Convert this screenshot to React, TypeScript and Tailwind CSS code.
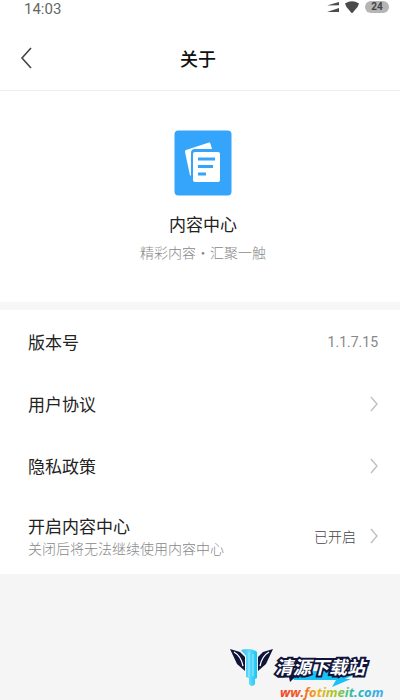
import type { ReactNode } from "react";

function Chevron() {
  return (
    <svg className="h-4 w-2 shrink-0" viewBox="0 0 8 16" fill="none" stroke="#bdbdbd" strokeWidth="1.3">
      <path d="M1 1 7 8 1 15" />
    </svg>
  );
}

function StatusBar() {
  return (
    <div className="flex items-center justify-between pl-6 pr-[11px] text-[#666]">
      <span className="font-['Roboto',sans-serif] text-[15px] leading-[18px]">14:03</span>
      <div className="flex items-center gap-1.5 pb-1">
        <svg className="h-3 w-3" viewBox="0 0 12 12" fill="#4a4a4a">
          <path d="M0 4.600 12 1v3.200zM0 11l12-4V11z" />
        </svg>
        <svg className="h-3 w-[14px]" viewBox="0 0 14 12" fill="#4a4a4a">
          <path d="M0 2.500Q7-2 14 2.500L12.500 6 7 12.500 1.500 6z" />
        </svg>
        <span className="h-3 w-6 rounded-full bg-[#b5b5b5] text-center font-['Roboto',sans-serif] text-[10px] font-bold leading-3 text-[#444]">
          24
        </span>
      </div>
    </div>
  );
}

function AppIcon() {
  return (
    <svg className="h-[66px] w-[58px]" viewBox="0 0 58 66">
      <rect x="0.5" y="0.5" width="57" height="65" rx="4" fill="#35a5fb" />
      <path d="M11 22q-.3-1.500 1-2L35 12.500q1-.3 1.300.7L38 19H21q-4 0-4 4v22.500h-1z" fill="#fff" />
      <rect x="19" y="22" width="27" height="30" rx="2" fill="#fff" />
      <path d="M24 29h17M24 36.500h15M24 44h8" stroke="#35a5fb" strokeWidth="3" />
    </svg>
  );
}

function Row({ label, note, children }: { label: string; note?: string; children: ReactNode }) {
  return (
    <button
      type="button"
      className={`flex w-full items-center justify-between text-left ${note ? "h-[77px]" : "h-[62px]"}`}
    >
      <span className="flex flex-col">
        <span className="text-[17px] leading-6 text-[#222]">{label}</span>
        {note && <span className="text-sm font-light text-[#888]">{note}</span>}
      </span>
      <span className="flex shrink-0 items-center gap-3.5">{children}</span>
    </button>
  );
}

function Watermark() {
  return (
    <svg className="h-14 w-[155px]" viewBox="0 0 155 56">
      <defs>
        <linearGradient id="drip" x1="0" y1="0" x2="1" y2="0">
          <stop offset="0" stopColor="#3fb4f0" />
          <stop offset="0.5" stopColor="#5fdcff" />
          <stop offset="1" stopColor="#18c6f2" />
        </linearGradient>
        <linearGradient id="rainbow" x1="0" y1="0" x2="1" y2="0">
          <stop offset="0" stopColor="#f0402a" />
          <stop offset="0.22" stopColor="#f0602a" />
          <stop offset="0.36" stopColor="#f0b020" />
          <stop offset="0.55" stopColor="#9bc832" />
          <stop offset="0.72" stopColor="#20b8b8" />
          <stop offset="1" stopColor="#45a8f0" />
        </linearGradient>
      </defs>
      <path d="M0 5 10 8l5 5v14L7 20z" fill="#11143a" />
      <path d="M43 5 33 8l-5 5v14l8-7z" fill="#11143a" />
      <path d="M4 8q7 4 9 14M39 8q-7 4-9 14" stroke="#fff" strokeWidth="1.3" fill="none" />
      <path d="M11 6q10-3 16 2v26l-2 1v5q-3 4-6 0v-6l-3-1V12z" fill="url(#drip)" />
      <path d="M19 8v25M23 10v22" stroke="#9becff" strokeWidth="1" fill="none" />
      <path d="m60 28 76-3-21 10h6l-19 8 4-7H64z" fill="#19c2f6" />
      <path d="m49 29 22 1-6 3-5 5-1-5H48z" fill="#11143a" />
      <g className="font-['Noto_Sans_CJK_SC',sans-serif] text-[18px] font-bold italic">
        <text x="45" y="30" fill="#fff" stroke="#11143a" strokeWidth="4" paintOrder="stroke">
          清源下载站
        </text>
      </g>
      <text x="50" y="53" className="font-['Open_Sans',sans-serif] text-[13px] font-bold italic" fill="url(#rainbow)">
        ww.fotimeit.com
      </text>
    </svg>
  );
}

export default function App() {
  return (
    <main className="flex min-h-screen flex-col bg-[#f5f5f5] font-['Noto_Sans_CJK_SC',sans-serif]">
      <header className="border-b border-[#ededed] bg-white">
        <StatusBar />
        <div className="grid h-[72px] grid-cols-[1fr_auto_1fr] items-center pb-1 pl-5 pr-6 pt-3">
          <button type="button" aria-label="返回" className="justify-self-start">
            <svg className="h-6 w-3" viewBox="0 0 12 24" fill="none" stroke="#444" strokeWidth="1.6">
              <path d="M11 2 2 12l9 10" />
            </svg>
          </button>
          <h1 className="text-lg font-medium text-[#111]">关于</h1>
        </div>
      </header>

      <section className="flex flex-col items-center bg-white pb-10 pl-1.5 pt-[39px]">
        <AppIcon />
        <h2 className="mt-4 text-[17px] leading-6 text-[#222]">内容中心</h2>
        <p className="mt-1.5 text-sm font-light text-[#888]">精彩内容・汇聚一触</p>
      </section>

      <section className="border-t-8 border-[#f7f7f7] bg-white pl-7 pr-[22px] pt-px">
        <Row label="版本号">
          <span className="font-['Roboto',sans-serif] text-sm text-[#888]">1.1.7.15</span>
        </Row>
        <Row label="用户协议">
          <Chevron />
        </Row>
        <Row label="隐私政策">
          <Chevron />
        </Row>
        <Row label="开启内容中心" note="关闭后将无法继续使用内容中心">
          <span className="text-sm font-light text-[#444]">已开启</span>
          <Chevron />
        </Row>
      </section>

      <footer className="mt-auto flex justify-end pr-[15px]">
        <Watermark />
      </footer>
    </main>
  );
}
